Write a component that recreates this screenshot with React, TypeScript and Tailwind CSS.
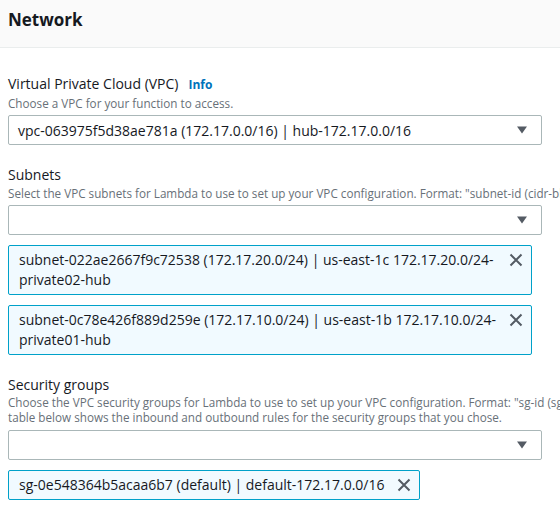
import React from "react";

const Caret = () => (
  <svg width="12" height="8" viewBox="0 0 12 8" className="shrink-0">
    <path d="M1 0.5h10L6 7.5z" fill="#545b64" />
  </svg>
);

const XIcon = () => (
  <svg width="14" height="14" viewBox="0 0 14 14" className="shrink-0">
    <path d="M1.5 1.5l11 11M12.5 1.5l-11 11" stroke="#545b64" strokeWidth="2" />
  </svg>
);

function Select({ value }: { value?: string }) {
  return (
    <div className="mt-1 flex h-[30px] w-[534px] items-center justify-between border border-[#aab7b8] rounded-[2px] bg-white pl-[9px] pr-[13px] text-[14px] text-[#16191f]">
      <span className="whitespace-nowrap">{value}</span>
      <Caret />
    </div>
  );
}

function Token({ lines, wide = true }: { lines: string[]; wide?: boolean }) {
  return (
    <div
      className={`mt-[10px] flex items-start justify-between gap-[12px] border border-[#00a1c9] rounded-[2px] bg-[#f1faff] py-[4px] pl-[10px] pr-[8px] text-[14px] leading-[20px] text-[#16191f] ${
        wide ? "w-[524px]" : "w-fit"
      }`}
    >
      <div>
        {lines.map((l) => (
          <div key={l} className="whitespace-nowrap">{l}</div>
        ))}
      </div>
      <div className="pt-[3px]">
        <XIcon />
      </div>
    </div>
  );
}

export default function App() {
  return (
    <div
      className="h-[509px] w-[560px] overflow-hidden bg-white text-[#16191f]"
      style={{ fontFamily: '"Open Sans", "Noto Sans", Arial, sans-serif' }}
    >
      <div className="h-[48px] border-b border-[#eaeded] bg-[#fafafa] px-2 pt-[8px]">
        <h2 className="text-[17px] font-bold leading-[24px]">Network</h2>
      </div>

      <div className="w-[620px] px-2 pt-[26px]">
        {/* VPC */}
        <div className="flex items-baseline gap-[10px] text-[14px] leading-[20px]">
          <span>Virtual Private Cloud (VPC)</span>
          <span className="text-[12px] font-bold text-[#0073bb]">Info</span>
        </div>
        <p className="text-[11.7px] leading-[16px] text-[#687078]">Choose a VPC for your function to access.</p>
        <Select value="vpc-063975f5d38ae781a (172.17.0.0/16) | hub-172.17.0.0/16" />

        {/* Subnets */}
        <div className="mt-[20px] text-[14px] leading-[20px]">Subnets</div>
        <p className="whitespace-nowrap text-[11.7px] leading-[16px] text-[#687078]">
          Select the VPC subnets for Lambda to use to set up your VPC configuration. Format: "subnet-id (cidr-block) | az name-tag".
        </p>
        <Select />
        <Token
          lines={[
            "subnet-022ae2667f9c72538 (172.17.20.0/24) | us-east-1c 172.17.20.0/24-",
            "private02-hub",
          ]}
        />
        <Token
          lines={[
            "subnet-0c78e426f889d259e (172.17.10.0/24) | us-east-1b 172.17.10.0/24-",
            "private01-hub",
          ]}
        />

        {/* Security groups */}
        <div className="mt-[20px] text-[14px] leading-[20px]">Security groups</div>
        <p className="whitespace-nowrap text-[11.7px] leading-[15px] text-[#687078]">
          Choose the VPC security groups for Lambda to use to set up your VPC configuration. Format: "sg-id (sg-name) | name-tag". The
          <br />
          table below shows the inbound and outbound rules for the security groups that you chose.
        </p>
        <div className="pt-[1px]">
          <Select />
        </div>
        <Token wide={false} lines={["sg-0e548364b5acaa6b7 (default) | default-172.17.0.0/16"]} />
      </div>
    </div>
  );
}
